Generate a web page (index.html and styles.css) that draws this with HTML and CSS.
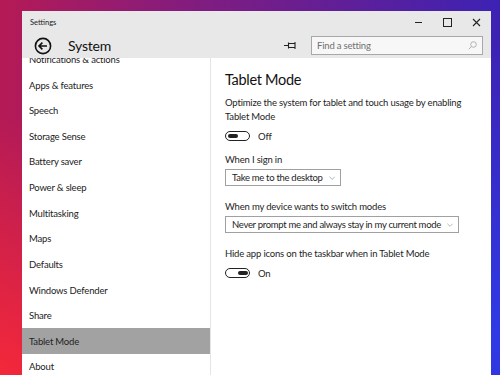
FILE: index.html
```html
<!DOCTYPE html>
<html>
<head>
<title>Settings</title>
<link rel="stylesheet" href="styles.css">
</head>
<body>
<div class="window">
<div class="titlebar">
<div class="title">Settings</div>
<div class="controls">
<div class="ctl"><svg width="9" height="9" viewBox="0 0 9 9"><line x1="1" y1="4.5" x2="8" y2="4.5" stroke="#222" stroke-width="1"/></svg></div>
<div class="ctl"><svg width="9" height="9" viewBox="0 0 9 9"><rect x="0.5" y="0.5" width="8" height="8" fill="none" stroke="#222" stroke-width="1"/></svg></div>
<div class="ctl"><svg width="9" height="9" viewBox="0 0 9 9"><path d="M1 1L8 8M8 1L1 8" stroke="#222" stroke-width="1.1"/></svg></div>
</div>
</div>
<div class="header">
<svg class="back" width="18" height="18" viewBox="0 0 18 18"><circle cx="9" cy="9" r="7.6" fill="none" stroke="#111" stroke-width="1.6"/><path d="M5 9H13M8.4 5.6L5 9L8.4 12.4" fill="none" stroke="#111" stroke-width="1.6"/></svg>
<div class="page-title">System</div>
<div class="spacer"></div>
<svg class="pin" width="13" height="9" viewBox="0 0 13 9"><path d="M0 4.5H4M4.5 1.5V7.5M4.5 2.5H11M4.5 6.5H11M11 1V8" fill="none" stroke="#222" stroke-width="1.1"/></svg>
<div class="search">
<span>Find a setting</span>
<svg width="9" height="9" viewBox="0 0 9 9"><circle cx="5.5" cy="3.5" r="2.8" fill="none" stroke="#aaa" stroke-width="0.9"/><line x1="3.5" y1="5.5" x2="0.8" y2="8.2" stroke="#aaa" stroke-width="0.9"/></svg>
</div>
</div>
<div class="main">
<div class="sidebar">
<div class="nav">
<div class="nav-item">Notifications &amp; actions</div>
<div class="nav-item">Apps &amp; features</div>
<div class="nav-item">Speech</div>
<div class="nav-item">Storage Sense</div>
<div class="nav-item">Battery saver</div>
<div class="nav-item">Power &amp; sleep</div>
<div class="nav-item">Multitasking</div>
<div class="nav-item">Maps</div>
<div class="nav-item">Defaults</div>
<div class="nav-item">Windows Defender</div>
<div class="nav-item">Share</div>
<div class="nav-item active">Tablet Mode</div>
<div class="nav-item">About</div>
</div>
</div>
<div class="content">
<h1>Tablet Mode</h1>
<p class="desc">Optimize the system for tablet and touch usage by enabling Tablet Mode</p>
<div class="switch-row"><div class="toggle"><div class="thumb"></div></div><span>Off</span></div>
<div class="label gap">When I sign in</div>
<div class="select short"><span>Take me to the desktop</span><svg width="9" height="6" viewBox="0 0 9 6"><path d="M0.5 1L4.5 5L8.5 1" fill="none" stroke="#888" stroke-width="0.9"/></svg></div>
<div class="label gap-lg">When my device wants to switch modes</div>
<div class="select long"><span>Never prompt me and always stay in my current mode</span><svg width="9" height="6" viewBox="0 0 9 6"><path d="M0.5 1L4.5 5L8.5 1" fill="none" stroke="#888" stroke-width="0.9"/></svg></div>
<div class="label gap-lg">Hide app icons on the taskbar when in Tablet Mode</div>
<div class="switch-row"><div class="toggle on"><div class="thumb"></div></div><span>On</span></div>
</div>
</div>
</div>
</body>
</html>
```
FILE: styles.css
```css
html,body{margin:0;height:375px;overflow:hidden}
body{padding:11px 0 0 22px;box-sizing:border-box;font-family:Lato,"Noto Sans",sans-serif;color:#1e1e1e;letter-spacing:-0.18px;
background:
radial-gradient(ellipse 260px 260px at 0% 100%,#f4283a 0%,rgba(244,40,58,0) 100%),
radial-gradient(ellipse 200px 300px at 100% 90%,#2f3ae6 0%,rgba(47,58,230,0) 100%),
linear-gradient(90deg,#b51a55 0%,#861c7c 35%,#6a1e90 60%,#3c22b4 100%)}
.window{width:469px;height:364px;background:#fff;display:flex;flex-direction:column}
.titlebar{height:22px;background:#e8e8e8;display:flex;align-items:center}
.title{font-size:7.5px;padding-left:8px;flex:1;color:#222;letter-spacing:0}
.controls{display:flex}
.ctl{width:29px;height:22px;display:flex;align-items:center;justify-content:center}
.header{height:25px;background:#e8e8e8;display:flex;align-items:center;padding-left:12px;position:relative;z-index:1}
.back{display:block}
.page-title{font-size:14px;letter-spacing:-0.2px;margin-left:16px;color:#111}
.spacer{flex:1}
.pin{margin-right:14px}
.search{width:172px;height:19px;box-sizing:border-box;border:1.5px solid #a8a8a8;background:#f7f7f7;margin-right:8px;display:flex;align-items:center;justify-content:space-between;padding:0 5px}
.search span{font-size:9.5px;color:#707070}
.main{flex:1;display:flex;overflow:hidden}
.sidebar{width:188px;border-right:1px solid #e4e4e4;overflow:hidden}
.nav{margin-top:-11.4px}
.nav-item{height:25.64px;display:flex;align-items:center;padding-left:7px;font-size:9.5px;color:#222}
.nav-item.active{background:#a2a2a2}
.content{flex:1;padding:12px 14px 0}
.content h1{margin:0;font-size:14.5px;letter-spacing:-0.3px;font-weight:normal;line-height:20px;color:#111}
.desc{margin:6px 0 0;font-size:9.5px;line-height:14px;width:245px}
.switch-row{display:flex;align-items:center;height:14px;margin-top:5px;font-size:9.5px}
.switch-row span{margin-left:8px}
.toggle{width:25px;height:10px;box-sizing:border-box;border:1.5px solid #222;border-radius:6px;display:flex;align-items:center;padding:0 1.5px}
.toggle.on{justify-content:flex-end}
.thumb{width:10px;height:4px;border-radius:3px;background:#222}
.label{font-size:9.5px;line-height:14px}
.gap{margin-top:10px}
.gap-lg{margin-top:14px}
.select{height:17px;box-sizing:border-box;border:1px solid #a0a0a0;margin-top:2px;display:flex;align-items:center;justify-content:space-between;gap:6px;padding:0 5px 0 6px;font-size:9.5px;letter-spacing:-0.3px;white-space:nowrap}
.select.short{width:116px}
.select.long{width:234px}
```
